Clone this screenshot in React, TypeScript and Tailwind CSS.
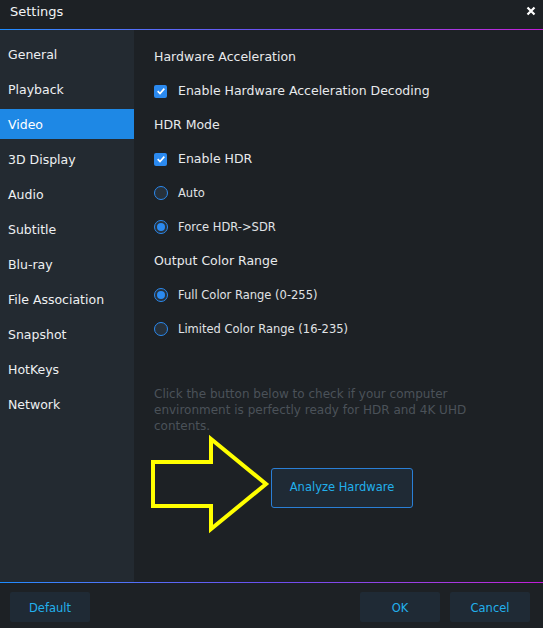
const nav = [
  "General",
  "Playback",
  "Video",
  "3D Display",
  "Audio",
  "Subtitle",
  "Blu-ray",
  "File Association",
  "Snapshot",
  "HotKeys",
  "Network",
];

function Check() {
  return (
    <span className="flex h-[13px] w-[13px] shrink-0 items-center justify-center rounded-[2px] bg-[#2b8af0]">
      <svg viewBox="0 0 12 12" className="h-[10px] w-[10px]">
        <path d="M2 6.2 L4.8 9 L10 3.2" fill="none" stroke="#fff" strokeWidth="2" />
      </svg>
    </span>
  );
}

function Radio({ on }: { on?: boolean }) {
  return (
    <span className="flex h-[14px] w-[14px] shrink-0 items-center justify-center rounded-full border border-[#2b8af0] bg-[#27313b]">
      {on && <span className="h-[8px] w-[8px] rounded-full bg-[#2b8af0]" />}
    </span>
  );
}

function Heading({ children }: { children: string }) {
  return <div className="flex h-[34px] items-center text-[12.5px] text-[#e8eaec]">{children}</div>;
}

function Row({ control, label, small }: { control: React.ReactNode; label: string; small?: boolean }) {
  return (
    <div
      className={
        "flex h-[34px] items-center " +
        (small ? "gap-[10px] text-[11.5px] text-[#e0e3e6]" : "gap-[11px] text-[12.5px] text-[#e8eaec]")
      }
    >
      {control}
      <span className={small ? "pt-[2px]" : ""}>{label}</span>
    </div>
  );
}

const footBtn = "h-[30px] w-[80px] rounded-[2px] bg-[#1f2a35] pt-[3px] text-[11.5px] text-[#22b0ec]";

export default function App() {
  return (
    <div
      className="relative flex h-[628px] w-[543px] flex-col bg-[#1d2125] text-white"
      style={{ fontFamily: "'DejaVu Sans', Verdana, sans-serif" }}
    >
      <div className="flex h-[29px] shrink-0 items-start justify-between bg-[#1d2125] pl-[10px] pr-[7px] pt-[2px]">
        <span className="text-[13px] text-[#f2f4f6]">Settings</span>
        <svg viewBox="0 0 10 10" className="mt-[4px] h-[10px] w-[10px]">
          <path d="M1.5 1.5 L8.5 8.5 M8.5 1.5 L1.5 8.5" stroke="#fff" strokeWidth="2.2" />
        </svg>
      </div>
      <div className="h-px shrink-0 bg-gradient-to-r from-[#1a8cff] via-[#6a4ef0] to-[#c21ad8]" />

      <div className="flex min-h-0 flex-1">
        <div className="w-[134px] bg-[#232a31] pt-[9px]">
          {nav.map((n) => (
            <div
              key={n}
              className={
                "mb-[5px] flex h-[30px] items-center pl-[8px] pt-[3px] text-[12.5px] " +
                (n === "Video" ? "bg-[#1e88e5] text-white" : "text-[#eef0f2]")
              }
            >
              {n}
            </div>
          ))}
        </div>

        <div className="flex-1 pl-[20px] pt-[10px]">
          <Heading>Hardware Acceleration</Heading>
          <Row control={<Check />} label="Enable Hardware Acceleration Decoding" />
          <Heading>HDR Mode</Heading>
          <Row control={<Check />} label="Enable HDR" />
          <Row small control={<Radio />} label="Auto" />
          <Row small control={<Radio on />} label="Force HDR->SDR" />
          <Heading>Output Color Range</Heading>
          <Row small control={<Radio on />} label="Full Color Range (0-255)" />
          <Row small control={<Radio />} label="Limited Color Range (16-235)" />

          <p className="mt-[40px] w-[350px] text-[12px] leading-[16px] text-[#4b5259]">
            Click the button below to check if your computer environment is perfectly ready for HDR and 4K UHD
            contents.
          </p>

          <button className="ml-[117px] mt-[34px] h-[40px] w-[142px] rounded-[3px] border border-[#2a7fd6] bg-[#1f2a35] text-[11.5px] text-[#22b0ec]">
            Analyze Hardware
          </button>
        </div>
      </div>

      <div className="h-px shrink-0 bg-gradient-to-r from-[#1a8cff] via-[#6a4ef0] to-[#c21ad8]" />
      <div className="flex h-[45px] shrink-0 items-start justify-between px-[10px] pt-[9px]">
        <button className={footBtn}>Default</button>
        <div className="flex gap-[10px] pr-[3px]">
          <button className={footBtn}>OK</button>
          <button className={footBtn}>Cancel</button>
        </div>
      </div>

      <svg className="pointer-events-none absolute left-0 top-0" width="543" height="628" viewBox="0 0 543 628">
        <polygon
          points="153,462 211,462 211,439 266,484 211,529 211,506 153,506"
          fill="none"
          stroke="#ffff00"
          strokeWidth="4"
        />
      </svg>
    </div>
  );
}
